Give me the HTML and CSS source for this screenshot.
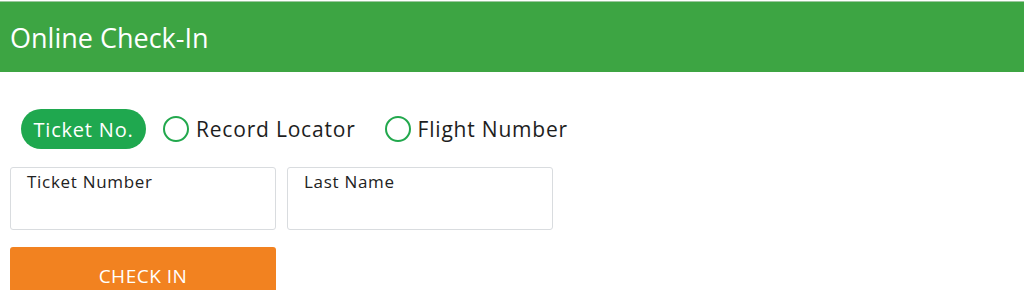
FILE: index.html
```html
<!DOCTYPE html>
<html>
<head>
<meta charset="utf-8">
<link rel="stylesheet" href="styles.css">
</head>
<body>
<div class="header">Online Check-In</div>
<div class="content">
  <div class="tabs">
    <span class="pill">Ticket No.</span>
    <label class="radio"><span class="circle"></span>Record Locator</label>
    <label class="radio"><span class="circle"></span>Flight Number</label>
  </div>
  <div class="fields">
    <div class="field"><span class="label">Ticket Number</span></div>
    <div class="field"><span class="label">Last Name</span></div>
  </div>
  <button class="btn">CHECK IN</button>
</div>
</body>
</html>
```
FILE: styles.css
```css
html, body { margin: 0; padding: 0; background: #fff; }
body { font-family: "Open Sans", "Noto Sans", sans-serif; color: #222; }
.header {
  margin-top: 1px;
  border-top: 1px solid #9cc79e;
  height: 71px;
  background: #3da543;
  color: #fff;
  font-size: 27px;
  display: flex;
  align-items: center;
  padding-left: 10px;
  box-sizing: border-box;
}
.content { padding: 37px 10px 0 10px; }
.tabs { display: flex; align-items: center; padding-left: 11px; height: 40px; }
.pill {
  background: #1fa84f;
  color: #fff;
  font-size: 20px;
  letter-spacing: 0.8px;
  height: 40px;
  border-radius: 20px;
  display: flex;
  align-items: center;
  box-sizing: border-box;
  width: 125px;
  justify-content: center;
}
.radio { display: flex; align-items: center; font-size: 21px; letter-spacing: 0.8px; color: #1e1e1e; margin-left: 17px; }
.radio + .radio { margin-left: 29px; }
.circle {
  width: 22px; height: 22px; border: 2px solid #22a84d; border-radius: 50%;
  margin-right: 7px; display: inline-block;
}
.fields { display: flex; gap: 11px; margin-top: 18px; }
.field {
  width: 266px; height: 63px; box-sizing: border-box;
  border: 1px solid #d9dcdf; border-radius: 3px;
  padding: 2px 0 0 16px;
}
.label { font-size: 17px; letter-spacing: 0.7px; color: #222; }
.btn {
  display: block;
  margin-top: 17px;
  width: 266px; height: 50px;
  border: 0; border-radius: 3px;
  background: #f28220; color: #fff;
  font-family: inherit; font-size: 19px; letter-spacing: 0.5px;
  padding: 8px 0 0 0;
}
```
